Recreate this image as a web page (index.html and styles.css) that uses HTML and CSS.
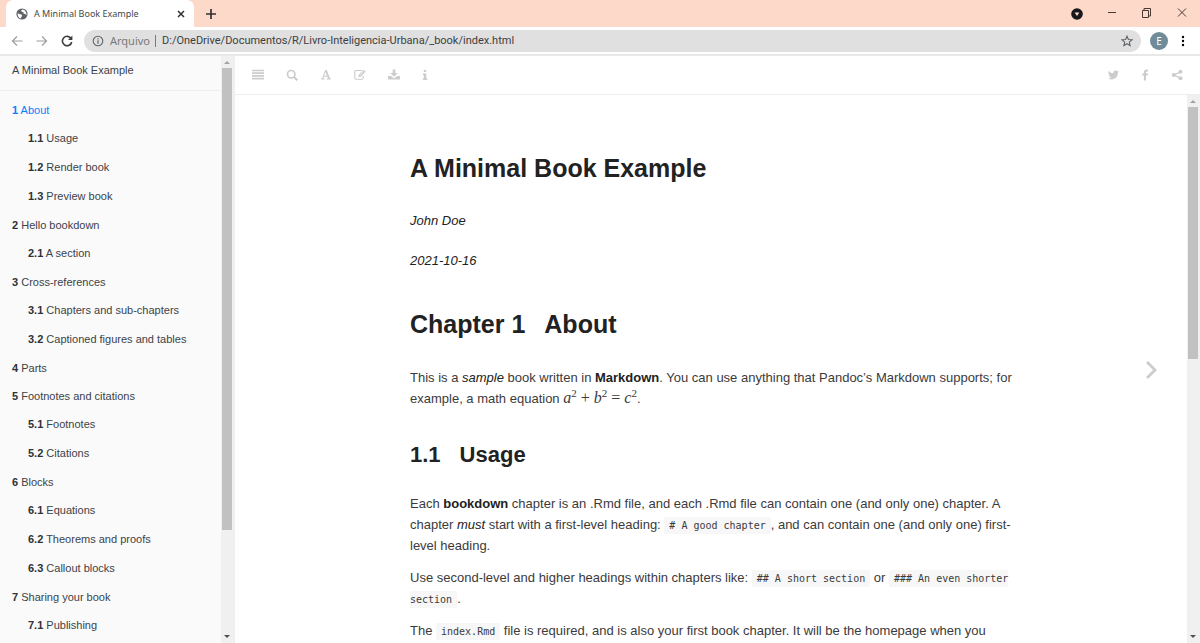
FILE: index.html
```html
<!DOCTYPE html>
<html lang="en">
<head>
<meta charset="utf-8">
<title>A Minimal Book Example</title>
<link rel="stylesheet" href="styles.css">
</head>
<body>
<header class="browser">
  <div class="tabstrip">
    <div class="tab">
      <svg class="favicon" viewBox="0 0 12 12" width="12" height="12"><circle cx="6" cy="6" r="5.6" fill="#5f6368"/><path d="M1.6 5.2 4 6.2 5.6 6.4 6.2 8 5.2 9 5 10.6C2.8 10.2 1.4 8 1.6 5.2ZM6.2 1.4 5 2.8 6.2 4 7.6 4.2 7.4 5.6 9.2 6 10.4 7.2C11 4.4 9 1.6 6.2 1.4Z" fill="#fff"/></svg>
      <span class="tab-title">A Minimal Book Example</span>
      <button class="plain" aria-label="Close tab"><svg viewBox="0 0 8 8" width="8" height="8"><path d="M1 1 7 7M7 1 1 7" stroke="#303236" stroke-width="1.5"/></svg></button>
    </div>
    <button class="plain new-tab" aria-label="New tab"><svg viewBox="0 0 10 10" width="10" height="10"><path d="M5 0V10M0 5H10" stroke="#303236" stroke-width="1.7"/></svg></button>
    <div class="window-controls">
      <button class="plain" aria-label="Search tabs"><svg viewBox="0 0 12 12" width="12" height="12"><circle cx="6" cy="6" r="5.8" fill="#16181c"/><path d="M3.6 4.4H8.4L6 8Z" fill="#fcd9c8"/></svg></button>
      <button class="plain" aria-label="Minimize"><svg viewBox="0 0 12 12" width="12" height="12"><path d="M2 4.5H10" stroke="#4a3a34"/></svg></button>
      <button class="plain" aria-label="Restore"><svg viewBox="0 0 12 12" width="12" height="12"><path d="M1.5 2.5H7.5V9.5H1.5ZM3 2V.5H9.500V8H8" fill="none" stroke="#4a3a34"/></svg></button>
      <button class="plain" aria-label="Close"><svg viewBox="0 0 12 12" width="12" height="12"><path d="M2 .5 10 8.500M10 .5 2 8.500" stroke="#4a3a34"/></svg></button>
    </div>
  </div>
  <div class="toolbar">
    <button class="plain" aria-label="Back"><svg viewBox="0 0 12 12" width="12" height="12"><path d="M11.500 6H1.500M6 1.500 1.500 6 6 10.500" fill="none" stroke="#9b9da0" stroke-width="1.2"/></svg></button>
    <button class="plain" aria-label="Forward"><svg viewBox="0 0 12 12" width="12" height="12"><path d="M.5 6H10.500M6 1.500 10.500 6 6 10.500" fill="none" stroke="#9b9da0" stroke-width="1.200"/></svg></button>
    <button class="plain" aria-label="Reload"><svg viewBox="0 0 12 12" width="12" height="12"><path d="M10 3.400A4.700 4.700 0 1 0 10.700 7" fill="none" stroke="#3b3d40" stroke-width="1.600"/><path d="M11.400.6V5H7Z" fill="#3b3d40"/></svg></button>
    <div class="omnibox">
      <svg viewBox="0 0 12 12" width="12" height="12"><circle cx="6" cy="6" r="4.800" fill="none" stroke="#5f6368" stroke-width="1.100"/><path d="M6 5.300V8.800M6 3.200V4.400" stroke="#5f6368" stroke-width="1.200"/></svg>
      <span class="scheme">Arquivo</span>
      <input class="address" aria-label="Address" value="D:/OneDrive/Documentos/R/Livro-Inteligencia-Urbana/_book/index.html">
      <button class="plain" aria-label="Bookmark"><svg viewBox="0 0 12 12" width="12" height="12"><path d="M6 1.200 7.400 4.500 11 4.800 8.300 7.100 9.100 10.600 6 8.700 2.900 10.600 3.700 7.100 1 4.800 4.600 4.500Z" fill="none" stroke="#5f6368" stroke-width="1.100"/></svg></button>
    </div>
    <button class="avatar" aria-label="Profile">E</button>
    <button class="plain" aria-label="Menu"><svg viewBox="0 0 4 12" width="4" height="12"><circle cx="2" cy="2" r="1.200"/><circle cx="2" cy="6" r="1.200"/><circle cx="2" cy="10" r="1.200"/></svg></button>
  </div>
</header>
<div class="book">
  <aside class="sidebar">
    <nav class="summary" aria-label="Summary">
      <a class="book-link" href="#title">A Minimal Book Example</a>
      <ul class="chapters">
        <li><a class="active" href="#about"><b>1</b> About</a>
          <ul><li><a href="#usage"><b>1.1</b> Usage</a></li><li><a href="#"><b>1.2</b> Render book</a></li><li><a href="#"><b>1.3</b> Preview book</a></li></ul></li>
        <li><a href="#"><b>2</b> Hello bookdown</a>
          <ul><li><a href="#"><b>2.1</b> A section</a></li></ul></li>
        <li><a href="#"><b>3</b> Cross-references</a>
          <ul><li><a href="#"><b>3.1</b> Chapters and sub-chapters</a></li><li><a href="#"><b>3.2</b> Captioned figures and tables</a></li></ul></li>
        <li><a href="#"><b>4</b> Parts</a></li>
        <li><a href="#"><b>5</b> Footnotes and citations</a>
          <ul><li><a href="#"><b>5.1</b> Footnotes</a></li><li><a href="#"><b>5.2</b> Citations</a></li></ul></li>
        <li><a href="#"><b>6</b> Blocks</a>
          <ul><li><a href="#"><b>6.1</b> Equations</a></li><li><a href="#"><b>6.2</b> Theorems and proofs</a></li><li><a href="#"><b>6.3</b> Callout blocks</a></li></ul></li>
        <li><a href="#"><b>7</b> Sharing your book</a>
          <ul><li><a href="#"><b>7.1</b> Publishing</a></li></ul></li>
      </ul>
    </nav>
    <div class="scrollbar" aria-hidden="true">
      <svg viewBox="0 0 12 12" width="12" height="12"><path d="M3 8 6 5 9 8Z" fill="#a3a3a3"/></svg>
      <div class="track"><div class="thumb thumb-summary"></div></div>
      <svg viewBox="0 0 12 12" width="12" height="12"><path d="M3 4 6 7 9 4Z" fill="#505050"/></svg>
    </div>
  </aside>
  <main class="reader">
    <div class="book-header">
      <button class="plain" aria-label="Toggle sidebar"><svg viewBox="0 0 12 12" width="12" height="12"><path d="M0 1.500H12M0 4.200H12M0 6.900H12M0 9.600H12" stroke="#ccc" stroke-width="1.700"/></svg></button>
      <button class="plain" aria-label="Search"><svg viewBox="0 0 12 12" width="12" height="12"><circle cx="5.200" cy="5.200" r="3.700" fill="none" stroke="#ccc" stroke-width="1.700"/><path d="M8 8 11.300 11.300" stroke="#ccc" stroke-width="2"/></svg></button>
      <button class="plain" aria-label="Font settings"><svg viewBox="0 0 12 12" width="12" height="12"><path d="M5.300 1H6.800L10 9.500H11V10.500H6.600V9.500H8L5.600 3 3.300 9.500H4.700V10.500H1V9.500H2ZM3.800 6.800H7.500V7.800H3.800Z" fill="#ccc"/></svg></button>
      <button class="plain" aria-label="Edit"><svg viewBox="0 0 12 12" width="12" height="12"><path d="M8 1.500H2Q.8 1.500.8 2.700V9Q.8 10.200 2 10.200H8Q9.200 10.200 9.200 9V7" fill="none" stroke="#ccc" stroke-width="1.100"/><path d="M4.500 8V6L9.800.7 11.700 2.600 6.400 8Z" fill="#ccc"/><path d="M5.800 6.200 9.800 2.200" stroke="#fff" stroke-width=".6"/></svg></button>
      <button class="plain" aria-label="Download"><svg viewBox="0 0 12 12" width="12" height="12"><path d="M4.700.5H7.300V4H9.800L6 7.700 2.200 4H4.700ZM0 7H3L6 9.500 9 7H12V10.500H0Z" fill="#ccc"/></svg></button>
      <button class="plain" aria-label="Information"><svg viewBox="3 0 6 12" width="6" height="12"><path d="M4.800 1H7.200V3H4.800ZM3.800 4.500H7.300V9.500H8.300V11H3.800V9.500H4.800V6H3.800Z" fill="#ccc"/></svg></button>
      <div class="share">
        <button class="plain" aria-label="Twitter"><svg viewBox="0 0 24 24" width="11" height="12"><path d="M23.950 4.600a10 10 0 0 1-2.800.8 5 5 0 0 0 2.200-2.700 10 10 0 0 1-3.100 1.200 4.900 4.900 0 0 0-8.400 4.500A14 14 0 0 1 1.700 3.100a4.900 4.900 0 0 0 1.500 6.600 4.900 4.900 0 0 1-2.200-.6 4.900 4.900 0 0 0 3.900 4.900 5 5 0 0 1-2.200.1 4.900 4.900 0 0 0 4.600 3.400A9.900 9.900 0 0 1 0 19.500a14 14 0 0 0 21.500-12.400 10 10 0 0 0 2.450-2.500Z" fill="#ccc"/></svg></button>
        <button class="plain" aria-label="Facebook"><svg viewBox="0 0 12 12" width="12" height="12"><path d="M9 .6V2.500H7.800Q7 2.500 7 3.300V4.500H9L8.700 6.500H7V11.500H4.900V6.500H3.200V4.500H4.900V3Q4.900.5 7.400.5Z" fill="#ccc"/></svg></button>
        <button class="plain" aria-label="Share"><svg viewBox="0 0 12 12" width="12" height="12"><path d="M9.500 2.800 2.800 6 9.500 9.200" fill="none" stroke="#ccc" stroke-width="1.300"/><circle cx="9.500" cy="2.800" r="2" fill="#ccc"/><circle cx="2.700" cy="6" r="2" fill="#ccc"/><circle cx="9.500" cy="9.200" r="2" fill="#ccc"/></svg></button>
      </div>
    </div>
    <div class="body">
      <div class="page-wrap">
        <article class="page">
          <h1 id="title">A Minimal Book Example</h1>
          <p class="meta">John Doe</p>
          <p class="meta">2021-10-16</p>
          <h1 id="about" class="chapter"><span class="number">Chapter 1</span>About</h1>
          <p>This is a <em>sample</em> book written in <strong>Markdown</strong>. You can use anything that Pandoc’s Markdown supports; for example, a math equation <span class="math"><i>a</i><sup>2</sup> + <i>b</i><sup>2</sup> = <i>c</i><sup>2</sup></span>.</p>
          <h2 id="usage"><span class="number">1.1</span>Usage</h2>
          <p>Each <strong>bookdown</strong> chapter is an .Rmd file, and each .Rmd file can contain one (and only one) chapter. A chapter <em>must</em> start with a first-level heading: <code># A good chapter</code>, and can contain one (and only one) first-level heading.</p>
          <p>Use second-level and higher headings within chapters like: <code>## A short section</code> or <code>### An even shorter section</code>.</p>
          <p>The <code>index.Rmd</code> file is required, and is also your first book chapter. It will be the homepage when you</p>
        </article>
        <a class="next" href="#" aria-label="Next page"><svg viewBox="0 0 12 20" width="12" height="20"><path d="M2 2 10 10 2 18" fill="none" stroke="#ccc" stroke-width="2.800"/></svg></a>
      </div>
      <div class="scrollbar" aria-hidden="true">
        <svg viewBox="0 0 12 12" width="12" height="12"><path d="M3 8 6 5 9 8Z" fill="#a3a3a3"/></svg>
        <div class="track"><div class="thumb thumb-page"></div></div>
        <svg viewBox="0 0 12 12" width="12" height="12"><path d="M3 4 6 7 9 4Z" fill="#505050"/></svg>
      </div>
    </div>
  </main>
</div>
</body>
</html>
```
FILE: styles.css
```css
* { box-sizing: border-box; }
body {
  margin: 0;
  height: 100vh;
  display: flex;
  flex-direction: column;
  overflow: hidden;
  background: #fff;
  color: #3b3b3b;
  font-family: "Liberation Sans", Arial, sans-serif;
}
ul { list-style: none; margin: 0; padding: 0; }
a { color: inherit; text-decoration: none; }
svg { display: block; flex: none; }
.plain { border: 0; padding: 0; background: none; display: block; }

/* Browser frame */
.browser { flex: none; font-family: "Noto Sans", "Open Sans", sans-serif; }
.tabstrip { display: flex; align-items: center; height: 27px; background: #fcd9c8; padding-left: 6px; }
.tab {
  display: flex;
  align-items: center;
  width: 188px;
  height: 27px;
  padding: 0 9px 0 10px;
  background: #fff;
  border-radius: 7px 7px 0 0;
}
.tab-title { flex: 1; margin-left: 6px; font-size: 9px; color: #45474a; }
.new-tab { margin-left: 12px; }
.window-controls { display: flex; gap: 23px; margin-left: auto; padding-right: 12px; }
.toolbar {
  display: flex;
  align-items: center;
  gap: 13px;
  height: 29px;
  padding: 0 15px 0 11px;
  border-bottom: 2px solid #e8e8e8;
}
.omnibox {
  flex: 1;
  display: flex;
  align-items: center;
  gap: 6px;
  height: 22px;
  margin: 0 -4px 0 -2px;
  padding: 0 8px;
  border-radius: 11px;
  background: #e0e0e0;
  font-size: 11px;
}
.scheme { color: #77797c; line-height: 12px; padding-right: 5px; border-right: 1px solid #77797c; }
.address {
  flex: 1;
  min-width: 0;
  border: 0;
  padding: 0;
  background: none;
  color: #3c3e41;
  font-family: Roboto, sans-serif;
  font-size: 11px;
}
.avatar {
  width: 18px;
  height: 18px;
  padding: 0;
  border: 0;
  border-radius: 50%;
  background: #6f8c98;
  color: #fff;
  font-family: inherit;
  font-size: 10px;
}

/* Book shell */
.book { flex: 1; min-height: 0; display: flex; }
.sidebar { flex: none; display: flex; width: 235px; background: #fafafa; border-right: 1px solid #eee; }
.summary { flex: 1; overflow: hidden; font-size: 11px; color: #3c4248; }
.book-link { display: block; line-height: 28px; padding: 0 12px 6px; border-bottom: 1px solid #eee; }
.chapters { padding-top: 5px; }
.chapters a { display: block; line-height: 28px; padding-left: 12px; white-space: nowrap; }
.chapters ul a { line-height: 29px; padding-left: 28px; }
.chapters b { color: #2c3238; }
.chapters a.active, .chapters .active b { color: #0880ff; }

.scrollbar { flex: none; display: flex; flex-direction: column; width: 13px; background: #f0f0f0; }
.track { flex: 1; padding: 0 2px 0 1px; }
.thumb { background: #c1c1c1; }
.thumb-summary { height: 82%; }
.thumb-page { height: 48%; }

.reader { flex: 1; min-width: 0; display: flex; flex-direction: column; }
.book-header {
  flex: none;
  display: flex;
  align-items: center;
  gap: 22px;
  height: 39px;
  padding: 0 17px;
  border-bottom: 1px solid #eee;
}
.share { display: flex; gap: 20px; margin-left: auto; }
.body { flex: 1; min-height: 0; display: flex; }
.page-wrap { flex: 1; min-width: 0; position: relative; overflow: hidden; }
.next { position: absolute; right: 30px; top: 50%; margin-top: -9px; }

/* Page text */
.page { max-width: 602px; margin: 0 auto; padding-top: 56px; font-size: 13px; line-height: 21px; }
.page h1 { margin: 0 0 25px; font-size: 25px; line-height: 34px; color: #222; }
.page h2 { margin: 32px 0 24px; font-size: 22px; line-height: 28px; color: #222; }
.page p { margin: 0 0 11px; }
.page .meta { margin-bottom: 19px; font-style: italic; color: #222; }
.page .chapter { margin: 36px 0 26px; }
.number { margin-right: 19px; }
.page strong { color: #222; }
.page em { color: #222; }
.page code {
  padding: 3px 5px;
  background: #f7f7f7;
  font-family: "DejaVu Sans Mono", monospace;
  font-size: 10px;
  line-height: 12px;
}
.math { font-family: "Liberation Serif", serif; font-size: 16px; line-height: 12px; }
.math sup { font-size: 11px; line-height: 0; }
```
